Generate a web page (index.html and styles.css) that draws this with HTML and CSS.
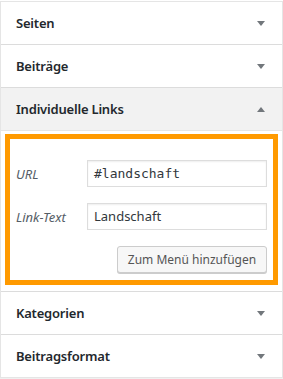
FILE: index.html
```html
<!DOCTYPE html>
<html lang="de">
<head>
<meta charset="utf-8">
<link rel="stylesheet" href="styles.css">
</head>
<body>
<div class="panel">
  <div class="section">
    <div class="head"><span class="title">Seiten</span><span class="arrow down"></span></div>
  </div>
  <div class="section">
    <div class="head"><span class="title">Beiträge</span><span class="arrow down"></span></div>
  </div>
  <div class="section open">
    <div class="head"><span class="title">Individuelle Links</span><span class="arrow up"></span></div>
    <div class="body">
      <div class="highlight">
        <div class="field">
          <label class="label">URL</label>
          <div class="input mono">#landschaft</div>
        </div>
        <div class="field">
          <label class="label">Link-Text</label>
          <div class="input">Landschaft</div>
        </div>
        <div class="actions"><button class="btn">Zum Menü hinzufügen</button></div>
      </div>
    </div>
  </div>
  <div class="section">
    <div class="head"><span class="title">Kategorien</span><span class="arrow down"></span></div>
  </div>
  <div class="section last">
    <div class="head"><span class="title">Beitragsformat</span><span class="arrow down"></span></div>
  </div>
</div>
</body>
</html>
```
FILE: styles.css
```css
html, body { margin: 0; padding: 0; background: #fff; }
body { font-family: "Noto Sans", "Open Sans", sans-serif; color: #23282d; width: 283px; height: 379px; overflow: hidden; }
.panel {
  width: 281px;
  border: 1px solid #e5e5e5;
  border-top: 0;
  background: #fff;
  box-shadow: 0 1px 1px rgba(0,0,0,0.06);
  margin-top: 1px;
  box-sizing: content-box;
}
.section { border-top: 1px solid #dcdcdc; }
.section:first-child { border-top: 1px solid #e5e5e5; }
.head {
  height: 42px;
  display: flex;
  align-items: center;
  justify-content: space-between;
  padding: 0 16px 0 15px;
}
.open .head { background: #f2f2f2; border-bottom: 1px solid #e5e5e5; }
.title { font-size: 13px; font-weight: 600; letter-spacing: -0.2px; white-space: nowrap; }
.arrow { width: 0; height: 0; border-left: 4px solid transparent; border-right: 4px solid transparent; margin-right: 1px; }
.arrow.down { border-top: 5px solid #72777c; }
.arrow.up { border-bottom: 5px solid #72777c; }
.body { padding: 3px 4px 6px 4px; }
.highlight {
  border: 5px solid #ff9a00;
  padding: 21px 6px 7px 6px;
  display: flex;
  flex-direction: column;
  gap: 16px;
}
.field { display: flex; align-items: center; }
.label { width: 71px; font-style: italic; font-size: 13px; color: #555d66; white-space: nowrap; }
.input {
  width: 180px; height: 27px; box-sizing: border-box;
  border: 1px solid #ddd; box-shadow: inset 0 1px 2px rgba(0,0,0,0.07);
  padding: 0 6px; font-size: 13px; line-height: 25px; color: #32373c; white-space: nowrap;
}
.mono { font-family: "DejaVu Sans Mono", monospace; font-size: 13px; }
.actions { display: flex; justify-content: flex-end; }
.btn {
  height: 27px; width: 150px; box-sizing: border-box;
  border: 1px solid #ccc; border-radius: 3px; background: #f7f7f7;
  box-shadow: 0 1px 0 #ccc; color: #555; font-family: inherit; font-size: 12px; padding: 0;
  white-space: nowrap; text-align: center;
}
```
